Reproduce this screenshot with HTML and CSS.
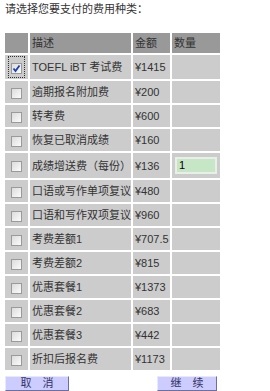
FILE: index.html
```html
<!DOCTYPE html>
<html lang="zh-CN">
<head>
<meta charset="utf-8">
<link rel="stylesheet" href="styles.css">
</head>
<body>
<p class="title">请选择您要支付的费用种类：</p>
<table class="fees">
  <colgroup><col class="c1"><col class="c2"><col class="c3"><col class="c4"></colgroup>
  <tr class="head"><th></th><th>描述</th><th>金额</th><th>数量</th></tr>
  <tr class="first"><td class="cb"><span class="focus"><span class="box checked"><svg viewBox="0 0 11 11" width="11" height="11"><path d="M2.5 5.5 L4.5 8 L8.5 2.5" fill="none" stroke="#1c3fa8" stroke-width="1.8"/></svg></span></span></td><td>TOEFL iBT 考试费</td><td>¥1415</td><td></td></tr>
  <tr><td class="cb"><span class="box"></span></td><td>逾期报名附加费</td><td>¥200</td><td></td></tr>
  <tr><td class="cb"><span class="box"></span></td><td>转考费</td><td>¥600</td><td></td></tr>
  <tr><td class="cb"><span class="box"></span></td><td>恢复已取消成绩</td><td>¥160</td><td></td></tr>
  <tr class="inrow"><td class="cb"><span class="box"></span></td><td>成绩增送费（每份）</td><td>¥136</td><td><span class="qty">1</span></td></tr>
  <tr><td class="cb"><span class="box"></span></td><td>口语或写作单项复议</td><td>¥480</td><td></td></tr>
  <tr><td class="cb"><span class="box"></span></td><td>口语和写作双项复议</td><td>¥960</td><td></td></tr>
  <tr><td class="cb"><span class="box"></span></td><td>考费差额1</td><td>¥707.5</td><td></td></tr>
  <tr><td class="cb"><span class="box"></span></td><td>考费差额2</td><td>¥815</td><td></td></tr>
  <tr><td class="cb"><span class="box"></span></td><td>优惠套餐1</td><td>¥1373</td><td></td></tr>
  <tr><td class="cb"><span class="box"></span></td><td>优惠套餐2</td><td>¥683</td><td></td></tr>
  <tr><td class="cb"><span class="box"></span></td><td>优惠套餐3</td><td>¥442</td><td></td></tr>
  <tr><td class="cb"><span class="box"></span></td><td>折扣后报名费</td><td>¥1173</td><td></td></tr>
</table>
<div class="actions">
  <span class="btn cancel">取　消</span>
  <span class="btn next">继　续</span>
</div>
</body>
</html>
```
FILE: styles.css
```css
html, body { margin: 0; padding: 0; background: #fff; }
body {
  font-family: "Liberation Sans", "Noto Sans CJK SC", sans-serif;
  font-size: 11px;
  color: #333;
}
.title {
  margin: 0;
  padding: 3px 0 0 5px;
  font-size: 11px;
  line-height: 13px;
}
.fees {
  margin: 15px 0 0 3px;
  border-collapse: separate;
  border-spacing: 2px;
  table-layout: fixed;
  width: 219px;
}
.c1 { width: 23px; }
.c2 { width: 101px; }
.c3 { width: 37px; }
.c4 { width: 48px; }
.fees th, .fees td {
  padding: 0 0 0 2px;
  text-align: left;
  font-weight: normal;
  white-space: nowrap;
  overflow: hidden;
  line-height: 14px;
  font-size: 11px;
}
.fees th { background: #999; height: 20px; color: #333; }
.fees td { background: #ccc; height: 22px; }
.fees tr.first td { height: 24px; }
.fees tr.inrow td { height: 25px; }
.fees td.cb { padding: 0; text-align: center; }
.box {
  display: inline-block;
  vertical-align: middle;
  width: 11px;
  height: 11px;
  box-sizing: border-box;
  border: 1px solid #9a9a9a;
  background: linear-gradient(135deg, #dcdcdc, #fbfbfb);
}
.box svg { display: block; margin: -1px; }
.focus {
  display: inline-block;
  vertical-align: middle;
  border: 1px dotted #333;
  padding: 3px 2px;
}
.qty {
  display: block;
  width: 42px;
  height: 17px;
  box-sizing: border-box;
  margin-left: 1px;
  background: #c6e6c6;
  border: 2px solid #e8eee8;
  color: #000;
  font-size: 11px;
  line-height: 13px;
  padding-left: 2px;
}
.actions {
  display: flex;
  padding: 4px 0 0 5px;
}
.btn {
  display: block;
  width: 64px;
  height: 15px;
  box-sizing: border-box;
  background: #ccccff;
  border: 1px solid;
  border-color: #e8e8ff #6f6f9f #6f6f9f #e8e8ff;
  color: #333366;
  font-size: 11px;
  line-height: 13px;
  text-align: center;
}
.next { margin-left: 88px; width: 60px; }
```
